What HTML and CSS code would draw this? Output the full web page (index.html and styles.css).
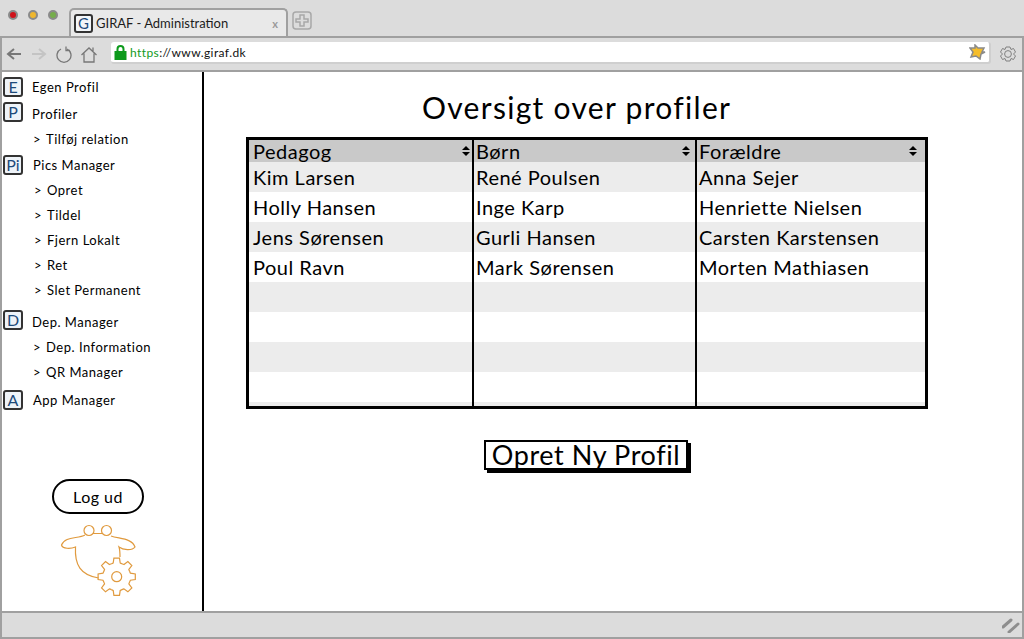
FILE: index.html
```html
<!DOCTYPE html>
<html lang="da">
<head>
<meta charset="utf-8">
<title>GIRAF - Administration</title>
<link rel="stylesheet" href="styles.css">
</head>
<body>
<div class="window">
  <header class="tabbar">
    <div class="lights"><span class="light red"></span><span class="light yellow"></span><span class="light green"></span></div>
    <div class="tab">
      <span class="favicon">G</span>
      <span class="tab-title">GIRAF - Administration</span>
      <span class="tab-close">x</span>
    </div>
    <svg class="newtab" width="20" height="19" viewBox="0 0 20 19"><rect x="1" y="1" width="18" height="17" rx="3" class="grey-s"/><path d="M8 4h4v4h4v3h-4v4H8v-4H4V8h4z" class="grey-s"/></svg>
  </header>
  <nav class="toolbar">
    <svg class="tool back" width="16" height="14" viewBox="0 0 16 14"><path d="M15 7H3M8 2 2 7l6 5" class="nav-s"/></svg>
    <svg class="tool fwd" width="16" height="14" viewBox="0 0 16 14"><path d="M1 7h12M8 2l6 5-6 5" class="nav-s light-s"/></svg>
    <svg class="tool reload" width="16" height="17" viewBox="0 0 16 17"><path d="M5 3a7 7 0 1 0 6 0" class="nav-s thin"/><path d="M10 0.500v4h4" class="nav-s thin"/></svg>
    <svg class="tool home" width="16" height="17" viewBox="0 0 16 17"><path d="M0.500 9 8 2l7.500 7M3 7.500V16h10V7.500M12 1.500v3.500" class="nav-s thin"/></svg>
    <div class="urlbar">
      <svg class="lock" width="13" height="15" viewBox="0 0 13 15"><path d="M3.500 7V4a3 3 0 0 1 6 0v3" class="lock-s"/><rect x="0.500" y="6" width="12" height="9" class="lock-f"/></svg>
      <span class="url"><span class="https">https</span>://www.giraf.dk</span>
      <svg class="star" width="17" height="16" viewBox="0 0 17 16"><path d="M6 1l3 3 6 0-2 4 3 0-4 2-1 5-4-3-5 1 2-5-3-4 5 0z" class="star-f"/></svg>
    </div>
    <svg class="settings" width="16" height="16" viewBox="-8 -8 16 16"><circle r="3.400" class="thin-g"/><path d="M-2-7 2-7 3-4.500 5.500-5.500 7.500-2 5.500 0 7.500 2 5.500 5.500 3 4.500 2 7-2 7-3 4.500-5.500 5.500-7.500 2-5.500 0-7.500-2-5.500-5.500-3-4.500z" class="thin-g"/></svg>
  </nav>
  <div class="content">
    <aside class="sidebar">
      <ul class="menu">
        <li class="item row-e"><span class="badge">E</span>Egen Profil</li>
        <li class="item row-p"><span class="badge up">P</span>Profiler</li>
        <li class="sub row-t"><span class="gt">&gt;</span>Tilføj relation</li>
        <li class="item row-pi"><span class="badge">Pi</span><span class="shift">Pics Manager</span></li>
        <li class="sub shift"><span class="gt">&gt;</span>Opret</li>
        <li class="sub shift"><span class="gt">&gt;</span>Tildel</li>
        <li class="sub shift"><span class="gt">&gt;</span>Fjern Lokalt</li>
        <li class="sub shift"><span class="gt">&gt;</span>Ret</li>
        <li class="sub shift"><span class="gt">&gt;</span>Slet Permanent</li>
        <li class="item row-d"><span class="badge up">D</span>Dep. Manager</li>
        <li class="sub"><span class="gt">&gt;</span>Dep. Information</li>
        <li class="sub"><span class="gt">&gt;</span>QR Manager</li>
        <li class="item row-a"><span class="badge">A</span><span class="shift">App Manager</span></li>
      </ul>
      <button class="logout">Log ud</button>
      <svg class="logo" width="80" height="80" viewBox="0 0 80 80">
        <circle cx="29" cy="10.500" r="5" class="or"/>
        <circle cx="46.500" cy="10.500" r="5" class="or"/>
        <path d="M33 13.500h10M25 15C18 19 5 16 1.500 25c1 4 9 4 14 2-1 18 5 28 23 31M51 16c8 3 21 2 24 11-3 4-12 3-16 0 1 3 1 7 1 10" class="or"/>
        <g transform="translate(56.700 56.700)">
          <path id="tooth" d="M-5.400-12.900Q-4-13.400-3.500-13.700L-2.800-18.600 2.800-18.600 3.500-13.700Q4-13.400 5.400-12.900" class="or"/>
          <use href="#tooth" transform="rotate(45)"/>
          <use href="#tooth" transform="rotate(90)"/>
          <use href="#tooth" transform="rotate(135)"/>
          <use href="#tooth" transform="rotate(180)"/>
          <use href="#tooth" transform="rotate(225)"/>
          <use href="#tooth" transform="rotate(270)"/>
          <use href="#tooth" transform="rotate(315)"/>
          <circle r="5" class="or"/>
        </g>
      </svg>
    </aside>
    <main class="main">
      <h1 class="title">Oversigt over profiler</h1>
      <table class="grid">
        <colgroup><col class="c1"><col class="c2"><col class="c3"></colgroup>
        <thead>
          <tr><th>Pedagog<span class="sort"></span></th><th>Børn<span class="sort mid"></span></th><th>Forældre<span class="sort far"></span></th></tr>
        </thead>
        <tbody>
          <tr><td>Kim Larsen</td><td>René Poulsen</td><td>Anna Sejer</td></tr>
          <tr><td>Holly Hansen</td><td>Inge Karp</td><td>Henriette Nielsen</td></tr>
          <tr><td>Jens Sørensen</td><td>Gurli Hansen</td><td>Carsten Karstensen</td></tr>
          <tr><td>Poul Ravn</td><td>Mark Sørensen</td><td>Morten Mathiasen</td></tr>
          <tr><td></td><td></td><td></td></tr>
          <tr><td></td><td></td><td></td></tr>
          <tr><td></td><td></td><td></td></tr>
          <tr><td></td><td></td><td></td></tr>
          <tr class="stub"><td></td><td></td><td></td></tr>
        </tbody>
      </table>
      <button class="create">Opret Ny Profil</button>
    </main>
  </div>
  <footer class="status">
    <svg class="grip" width="18" height="15" viewBox="0 0 18 15"><path d="M1 9 9 2M7 14 16 6" class="grip-s"/></svg>
  </footer>
</div>
</body>
</html>
```

FILE: styles.css
```css
* { box-sizing: border-box; }
html, body { margin: 0; padding: 0; }
body { width: 1024px; height: 639px; overflow: hidden; background: #fff; font-family: "Lato", "Open Sans", sans-serif; color: #000; }
.window { width: 1024px; height: 639px; display: flex; flex-direction: column; border: 2px solid #a0a0a0; border-top: 0; }

.tabbar { height: 36px; background: #dcdcdc; display: flex; align-items: flex-start; flex: none; margin: 0 -2px; padding-left: 8px; }
.lights { display: flex; gap: 10px; margin-top: 10px; width: 60px; }
.light { width: 10px; height: 10px; border-radius: 50%; border: 2px solid #8a8a8a; }
.red { background: #d0121b; }
.yellow { background: #efb72e; }
.green { background: #75ad4b; }
.tab { width: 219px; height: 28px; margin: 8px 0 0 1px; border: 2px solid #a0a0a0; border-bottom: 0; border-radius: 5px 5px 0 0; background: #e9e9e9; display: flex; align-items: center; padding-left: 3px; font-size: 13px; color: #1c1c1c; }
.favicon { width: 19px; height: 19px; border: 2px solid #333; border-radius: 3px; background: #f3f6f9; color: #1d4a7a; font-size: 15px; line-height: 15px; text-align: center; flex: none; }
.tab-title { margin-left: 3px; white-space: nowrap; }
.tab-close { margin-left: auto; margin-right: 8px; color: #9a9a9a; font-weight: 700; font-size: 11px; }
.newtab { margin: 11px 0 0 4px; }
.grey-s { fill: none; stroke: #a8a8a8; stroke-width: 1.5; }

.toolbar { height: 36px; background: #dcdcdc; border-top: 2px solid #a0a0a0; border-bottom: 2px solid #a0a0a0; display: flex; align-items: center; flex: none; padding-left: 4px; }
.tool { flex: none; }
.fwd { margin-left: 9px; }
.reload { margin-left: 9px; }
.home { margin-left: 9px; }
.nav-s { fill: none; stroke: #777; stroke-width: 2; }
.light-s { stroke: #c4c4c4; }
.thin { stroke-width: 1.3; }
.urlbar { width: 880px; height: 22px; margin: 0 0 2px 14px; background: #fff; border: 0 solid #cfcfcf; border-width: 0 2px 2px 0; border-radius: 3px; display: flex; align-items: center; padding-left: 3px; font-size: 12px; flex: none; }
.lock { flex: none; }
.lock-s { fill: none; stroke: #0d9a1c; stroke-width: 2; }
.lock-f { fill: #0d9a1c; }
.url { margin-left: 3px; letter-spacing: 0.4px; color: #111; }
.https { color: #119a22; }
.star { margin-left: auto; margin-right: 3px; }
.star-f { fill: #f5bd2a; stroke: #8a8a8a; stroke-width: 1.5; }
.settings { margin-left: 9px; }
.thin-g { fill: none; stroke: #808080; stroke-width: 1; }

.content { flex: 1; display: flex; min-height: 0; }
.sidebar { width: 202px; flex: none; border-right: 2px solid #000; display: flex; flex-direction: column; padding-left: 1px; }
.menu { list-style: none; margin: 0; padding: 0; font-size: 13px; letter-spacing: 0.5px; }
.item { display: flex; align-items: center; height: 25px; }
.sub { height: 25px; display: flex; align-items: center; padding-left: 30px; }
.gt { margin-right: 5px; }
.badge { width: 20px; height: 20px; border: 2px solid #333; border-radius: 3px; background: #eef3f8; color: #1d4a7a; font-size: 16px; line-height: 16px; text-align: center; margin-right: 9px; flex: none; letter-spacing: 0; }
.up { transform: translateY(-2px); }
.row-e { margin-top: 2px; }
.row-p { margin-top: 2px; }
.row-t { height: 26px; }
.row-d { margin-top: 7px; }
.row-a { margin-top: 3px; }
.shift { margin-left: 1px; }
.sub.shift { margin-left: 0; padding-left: 31px; }
.logout { width: 92px; height: 35px; margin: 67px 0 0 49px; border: 2px solid #000; border-radius: 18px; background: #fff; font: inherit; font-size: 16px; letter-spacing: 0.5px; padding: 0; }
.logo { margin: 6px 0 0 57px; flex: none; }
.or, use { fill: none; stroke: #e09a3e; stroke-width: 1.2; }

.main { flex: 1; display: flex; flex-direction: column; align-items: flex-start; min-width: 0; padding-left: 42px; }
.title { margin: 18px 0 12px 176px; height: 35px; font-size: 30px; line-height: 35px; font-weight: 400; letter-spacing: 1.3px; white-space: nowrap; }
.grid { width: 682px; table-layout: fixed; border-collapse: separate; border-spacing: 0; border: 3px solid #000; font-size: 20px; letter-spacing: 0.5px; }
.c1 { width: 223px; }
.c2 { width: 223px; }
.c3 { width: 230px; }
.grid th, .grid td { border-left: 2px solid #000; padding: 0 0 0 2px; text-align: left; white-space: nowrap; }
.grid th:first-child, .grid td:first-child { border-left: 0; padding-left: 4px; }
.grid th { height: 22px; background: #c9c9c9; font-weight: 400; position: relative; line-height: 20px; }
.grid td { height: 30px; }
.grid tbody tr:nth-child(odd) td { background: #ececec; }
.grid .stub td { height: 4px; }
.sort { position: absolute; right: 2px; top: 6px; width: 8px; height: 10px; }
.sort.mid { right: 5px; }
.sort.far { right: 8px; }
.sort::before, .sort::after { content: ""; position: absolute; left: 0; border-left: 4px solid transparent; border-right: 4px solid transparent; }
.sort::before { top: 0; border-bottom: 4px solid #000; }
.sort::after { bottom: 0; border-top: 4px solid #000; }
.create { width: 204px; height: 30px; margin: 31px 0 0 238px; border: 2px solid #000; box-shadow: 3px 3px 0 #000; background: #fff; font: inherit; font-size: 27px; line-height: 24px; letter-spacing: 0.6px; padding: 0 0 1px; white-space: nowrap; }

.status { height: 26px; flex: none; background: #dcdcdc; border-top: 2px solid #a0a0a0; display: flex; align-items: center; justify-content: flex-end; padding-right: 2px; }
.grip-s { fill: none; stroke: #8e8e8e; stroke-width: 3; stroke-linecap: round; }
```
